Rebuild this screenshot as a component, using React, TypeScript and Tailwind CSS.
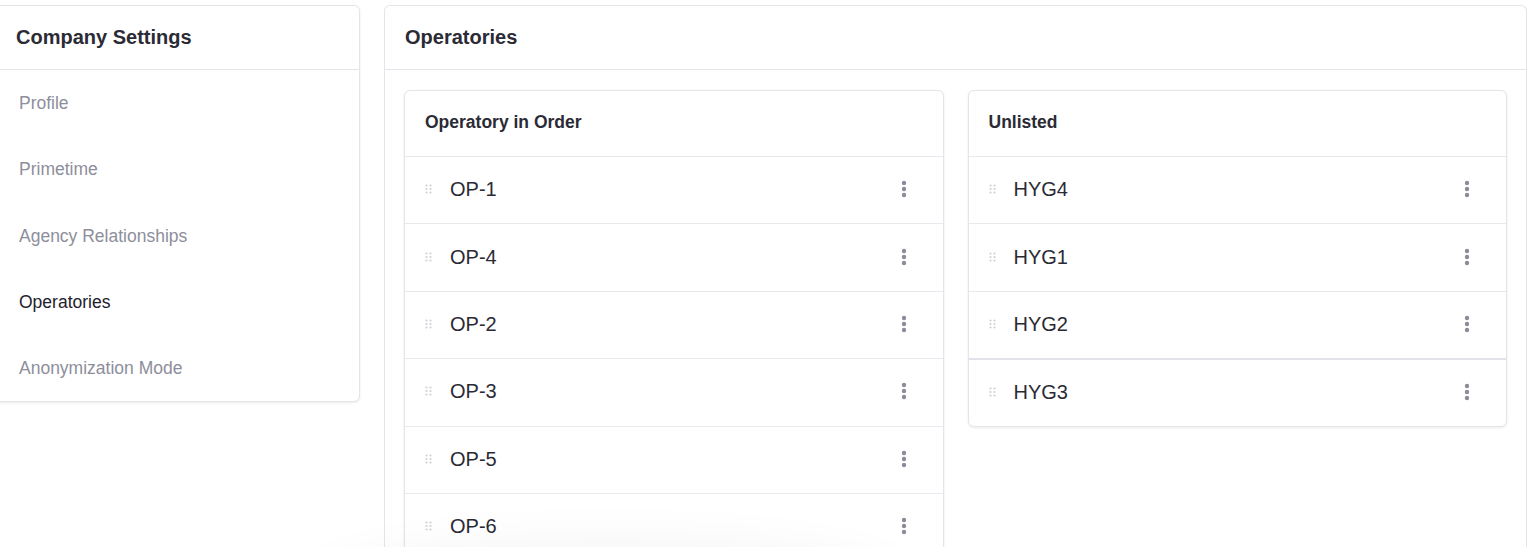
import { useState } from "react";

type Row = { id: string; label: string };

const MENU = [
  "Profile",
  "Primetime",
  "Agency Relationships",
  "Operatories",
  "Anonymization Mode",
];

const ORDERED: Row[] = ["OP-1", "OP-4", "OP-2", "OP-3", "OP-5", "OP-6"].map(
  (label) => ({ id: label, label }),
);

const UNLISTED: Row[] = ["HYG4", "HYG1", "HYG2", "HYG3"].map((label) => ({
  id: label,
  label,
}));

function DragHandle(): React.JSX.Element {
  return (
    <svg width="8" height="10" viewBox="0 0 8 10" aria-hidden="true" className="shrink-0">
      {[1.5, 5, 8.5].map((cy) => (
        <g key={cy} fill="#cfd0d6">
          <circle cx="1.5" cy={cy} r="1.1" />
          <circle cx="5.5" cy={cy} r="1.1" />
        </g>
      ))}
    </svg>
  );
}

function Kebab(): React.JSX.Element {
  return (
    <svg width="6" height="18" viewBox="0 0 6 18" aria-hidden="true">
      <g fill="#8b8c99">
        <circle cx="3" cy="3" r="2.2" />
        <circle cx="3" cy="9" r="2.2" />
        <circle cx="3" cy="15" r="2.2" />
      </g>
    </svg>
  );
}

function ListCard({
  title,
  rows,
  thickIndex,
}: {
  title: string;
  rows: Row[];
  thickIndex?: number;
}): React.JSX.Element {
  return (
    <div className="self-start overflow-hidden rounded-md border border-[#e4e4ea] bg-white shadow-[0_1px_3px_rgba(0,0,0,0.08)]">
      <div className="flex h-[65px] items-center pb-[2px] px-5 text-[17.5px] font-bold text-[#2b2b36]">
        {title}
      </div>
      {rows.map((row, idx) => (
        <div
          key={row.id}
          className={`flex h-[67.4px] items-center pb-[2px] pl-5 pr-9 ${
            idx === thickIndex
              ? "border-t-2 border-[#e2e3ea]"
              : "border-t border-[#e8e8ed]"
          }`}
        >
          <DragHandle />
          <span className="ml-[17px] flex-1 text-[20px] text-[#2a2a35]">{row.label}</span>
          <button type="button" className="flex items-center" aria-label="More">
            <Kebab />
          </button>
        </div>
      ))}
    </div>
  );
}

export default function App(): React.JSX.Element {
  const [active, setActive] = useState("Operatories");

  return (
    <div
      className="relative flex h-[547px] gap-6 overflow-hidden bg-white pr-[9px] pt-[5px]"
      style={{ fontFamily: '"Liberation Sans", Arial, sans-serif' }}
    >
      {/* Settings menu */}
      <div className="-ml-[5px] w-[365px] shrink-0 self-start rounded-md border border-[#e4e4ea] bg-white shadow-[0_1px_3px_rgba(0,0,0,0.08)]">
        <div className="flex h-[64px] items-center border-b border-[#e4e4ea] pb-[2px] px-5 text-[20px] font-bold text-[#2b2b36]">
          Company Settings
        </div>
        <nav className="flex flex-col">
          {MENU.map((item) => (
            <button
              key={item}
              type="button"
              onClick={() => setActive(item)}
              className={`flex h-[66.25px] items-center px-[23px] text-left text-[17.5px] ${
                item === active ? "text-[#22222c]" : "text-[#8d8e9b]"
              }`}
            >
              {item}
            </button>
          ))}
        </nav>
      </div>

      {/* Operatories panel */}
      <div className="flex min-w-0 flex-1 flex-col rounded-t-md border border-b-0 border-[#e4e4ea] bg-white">
        <div className="flex h-[64px] shrink-0 items-center border-b border-[#e4e4ea] pb-[2px] px-5 text-[20px] font-bold text-[#2b2b36]">
          Operatories
        </div>
        <div className="grid grid-cols-2 gap-6 px-[19px] pt-5">
          <ListCard title="Operatory in Order" rows={ORDERED} />
          <ListCard title="Unlisted" rows={UNLISTED} thickIndex={3} />
        </div>
      </div>

      {/* soft shadow of an element just below the fold */}
      <div className="pointer-events-none absolute left-[330px] top-[575px] h-[60px] w-[560px] rounded-[50%] shadow-[0_0_60px_20px_rgba(0,0,0,0.07)]" />
    </div>
  );
}
